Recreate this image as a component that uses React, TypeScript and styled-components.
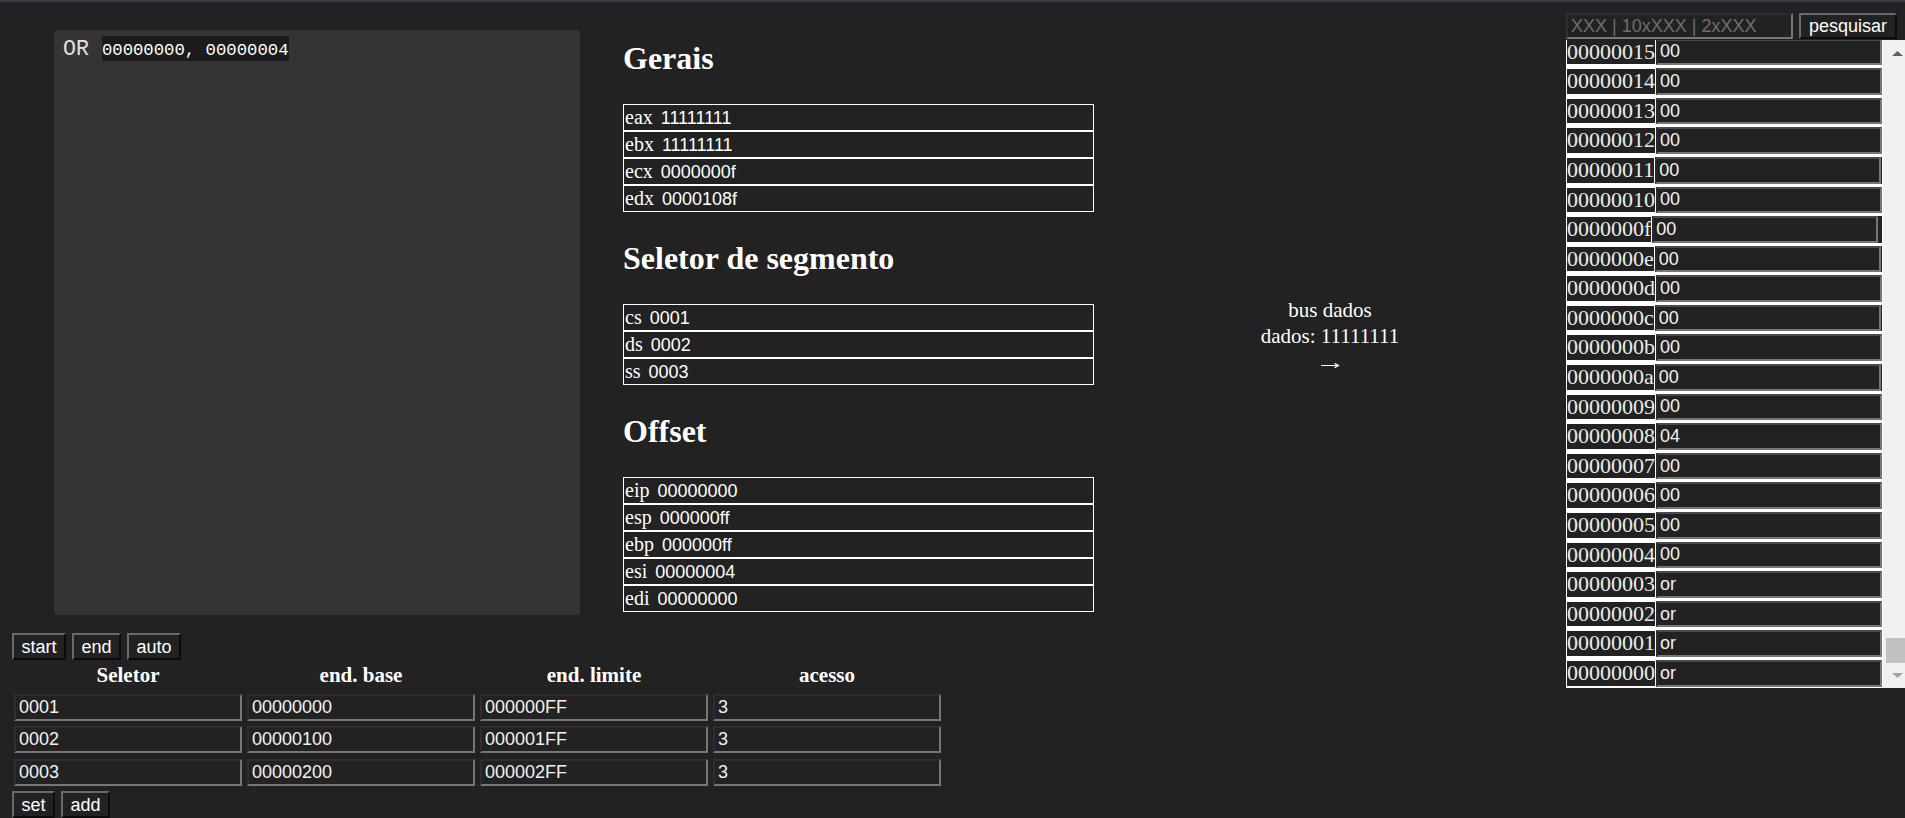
import React from "react";
import styled, { createGlobalStyle } from "styled-components";

const GlobalStyle = createGlobalStyle`
  html, body {
    margin: 0;
    padding: 0;
    background: #222222;
    overflow: hidden;
  }
  body {
    font-family: "Liberation Serif", "Times New Roman", serif;
    color: #ffffff;
  }
  *, *::before, *::after { box-sizing: border-box; }
`;

const Page = styled.div`
  display: grid;
  grid-template-columns: 1fr 339px;
  width: 1905px;
  height: 818px;
  border-top: 2px solid #3a3a44;
`;

const LeftArea = styled.div`
  display: flex;
  flex-direction: column;
  min-width: 0;
`;

const TopRow = styled.div`
  display: flex;
  padding: 10px 0 0 53.5px;
`;

const Editor = styled.div`
  flex: none;
  width: 526.5px;
  height: 585px;
  margin: 18px 0;
  padding: 6px 9.5px;
  background: #343434;
  border-radius: 4px;
  font-family: "Liberation Mono", "Courier New", monospace;
  font-size: 21.6px;
  color: #e2e2e2;
  white-space: pre;
`;

const Operands = styled.span`
  display: inline-block;
  padding: 5px 0 0;
  background: #1c1c1c;
  font-family: "Liberation Mono", monospace;
  font-size: 17.3px;
  line-height: 19.6px;
  color: #ffffff;
`;

const Registers = styled.div`
  flex: none;
  width: 471px;
  margin-left: 43px;
  display: flex;
  flex-direction: column;
`;

const SectionTitle = styled.h1`
  margin: 28px 0;
  font-size: 32px;
  line-height: 36px;
  font-weight: bold;
  color: #ffffff;
`;

const RegTable = styled.div`
  display: flex;
  flex-direction: column;
`;

const RegRow = styled.div`
  display: flex;
  align-items: baseline;
  gap: 8px;
  height: 27px;
  padding-left: 1px;
  border: 1px solid #ffffff;
  line-height: 25px;
`;

const RegName = styled.span`
  font-size: 20px;
`;

const RegValue = styled.span`
  font-family: "Liberation Sans", Arial, sans-serif;
  font-size: 18px;
`;

const BusArea = styled.div`
  flex: 1;
  padding-top: 285px;
  text-align: center;
  font-size: 21px;
  line-height: 26px;
`;

const Arrow = styled.span`
  display: inline-block;
  transform: scaleX(1.45);
`;

const Controls = styled.div`
  display: flex;
  flex-direction: column;
  align-items: flex-start;
  padding-left: 12px;
`;

const ButtonRow = styled.div<{ $top?: number }>`
  display: flex;
  gap: 6px;
  margin-top: ${(p) => p.$top ?? 0}px;
`;

const Button = styled.button`
  height: 27px;
  padding: 0 7.5px;
  font-family: "Liberation Sans", Arial, sans-serif;
  font-size: 18px;
  line-height: 20px;
  color: #ffffff;
  background: #222222;
  border: 2px solid;
  border-color: #6a6a6a #0c0c0c #0c0c0c #6a6a6a;
`;

const SegGrid = styled.div`
  display: grid;
  grid-template-columns: repeat(4, 228px);
  column-gap: 5px;
  row-gap: 5.5px;
  margin-left: 2px;
`;

const HeadCell = styled.div`
  height: 28px;
  line-height: 31px;
  text-align: center;
  font-weight: bold;
  font-size: 21px;
`;

const TextField = styled.input<{ $w: number; $h?: number }>`
  width: ${(p) => p.$w}px;
  height: ${(p) => p.$h ?? 27}px;
  padding: 0 3px;
  margin: 0;
  font-family: "Liberation Sans", Arial, sans-serif;
  font-size: 18px;
  color: #f2f2f2;
  background: #222222;
  border: 2px solid;
  border-color: #2e2e2e #777777 #777777 #2e2e2e;
  outline: none;
  &::placeholder {
    color: #6e6e6e;
  }
`;

const MemoryColumn = styled.div`
  display: flex;
  flex-direction: column;
  gap: 1px;
  padding-top: 11px;
  min-width: 0;
`;

const SearchRow = styled.div`
  display: flex;
  gap: 6px;
`;

const SearchButton = styled(Button)`
  height: 26px;
  padding: 0 8px;
`;

const MemBox = styled.div`
  display: flex;
  height: 648px;
  background: #ffffff;
`;

const MemList = styled.div`
  flex: 1;
  min-width: 0;
  overflow: hidden;
  display: flex;
  flex-direction: column-reverse;
  gap: 3px;
  padding-bottom: 1.4px;
`;

const Scrollbar = styled.div`
  flex: none;
  width: 22px;
  display: flex;
  flex-direction: column;
  background: #f1f1f1;
`;

const ScrollButton = styled.div<{ $pad: number }>`
  flex: none;
  height: 22px;
  display: flex;
  justify-content: center;
  align-items: flex-start;
  padding: ${(p) => p.$pad}px 0 0 6px;
`;

const ScrollTrack = styled.div`
  flex: 1;
  display: flex;
  flex-direction: column;
  justify-content: flex-end;
  align-items: flex-end;
  padding-bottom: 3px;
`;

const Thumb = styled.div`
  width: 19px;
  height: 25px;
  background: #c1c1c1;
`;

const MemRow = styled.div`
  display: flex;
  flex: none;
  width: 316px;
  height: 26.6px;
  background: #222222;
`;

const Address = styled.span`
  flex: none;
  border: 1px solid #ffffff;
  font-size: 22px;
  line-height: 24.6px;
  color: #ececec;
  background: #222222;
`;

const MemValue = styled.input`
  flex: none;
  width: 226px;
  height: 100%;
  margin: 0;
  padding: 0 2px;
  font-family: "Liberation Sans", Arial, sans-serif;
  font-size: 18px;
  color: #f2f2f2;
  background: #222222;
  border: 2px solid;
  border-color: #4a4a4a #777777 #777777 #2a2a2a;
  outline: none;
`;

const gerais = [
  ["eax", "11111111"],
  ["ebx", "11111111"],
  ["ecx", "0000000f"],
  ["edx", "0000108f"],
];
const segmentos = [
  ["cs", "0001"],
  ["ds", "0002"],
  ["ss", "0003"],
];
const offsets = [
  ["eip", "00000000"],
  ["esp", "000000ff"],
  ["ebp", "000000ff"],
  ["esi", "00000004"],
  ["edi", "00000000"],
];

const segRows = [
  ["0001", "00000000", "000000FF", "3"],
  ["0002", "00000100", "000001FF", "3"],
  ["0003", "00000200", "000002FF", "3"],
];

const memory = Array.from({ length: 512 }, (_, i) => {
  const addr = i.toString(16).padStart(8, "0");
  let v = "00";
  if (i <= 3) v = "or";
  else if (i === 8) v = "04";
  return { addr, v };
});

function RegisterGroup({ title, rows }: { title: string; rows: string[][] }) {
  return (
    <>
      <SectionTitle>{title}</SectionTitle>
      <RegTable>
        {rows.map(([n, v]) => (
          <RegRow key={n}>
            <RegName>{n}</RegName>
            <RegValue>{v}</RegValue>
          </RegRow>
        ))}
      </RegTable>
    </>
  );
}

export default function App() {
  return (
    <>
      <GlobalStyle />
      <Page>
        <LeftArea>
          <TopRow>
            <Editor>
              {"OR "}
              <Operands>00000000, 00000004</Operands>
            </Editor>
            <Registers>
              <RegisterGroup title="Gerais" rows={gerais} />
              <RegisterGroup title="Seletor de segmento" rows={segmentos} />
              <RegisterGroup title="Offset" rows={offsets} />
            </Registers>
            <BusArea>
              <div>bus dados</div>
              <div>dados: 11111111</div>
              <div>
                <Arrow>→</Arrow>
              </div>
            </BusArea>
          </TopRow>
          <Controls>
            <ButtonRow>
              <Button>start</Button>
              <Button>end</Button>
              <Button>auto</Button>
            </ButtonRow>
            <SegGrid>
              <HeadCell>Seletor</HeadCell>
              <HeadCell>end. base</HeadCell>
              <HeadCell>end. limite</HeadCell>
              <HeadCell>acesso</HeadCell>
              {segRows.map((r) =>
                r.map((c, j) => <TextField key={r[0] + j} $w={228} defaultValue={c} />)
              )}
            </SegGrid>
            <ButtonRow $top={5.5}>
              <Button>set</Button>
              <Button>add</Button>
            </ButtonRow>
          </Controls>
        </LeftArea>
        <MemoryColumn>
          <SearchRow>
            <TextField $w={227} $h={26} placeholder="XXX | 10xXXX | 2xXXX" />
            <SearchButton>pesquisar</SearchButton>
          </SearchRow>
          <MemBox>
            <MemList>
              {memory.map((m) => (
                <MemRow key={m.addr}>
                  <Address>{m.addr}</Address>
                  <MemValue defaultValue={m.v} />
                </MemRow>
              ))}
            </MemList>
            <Scrollbar>
              <ScrollButton $pad={11}>
                <svg width="11" height="5" viewBox="0 0 11 5">
                  <polygon points="0,5 5.5,0 11,5" fill="#606060" />
                </svg>
              </ScrollButton>
              <ScrollTrack>
                <Thumb />
              </ScrollTrack>
              <ScrollButton $pad={6.7}>
                <svg width="11" height="5" viewBox="0 0 11 5">
                  <polygon points="0,0 11,0 5.5,5" fill="#a3a3a3" />
                </svg>
              </ScrollButton>
            </Scrollbar>
          </MemBox>
        </MemoryColumn>
      </Page>
    </>
  );
}
